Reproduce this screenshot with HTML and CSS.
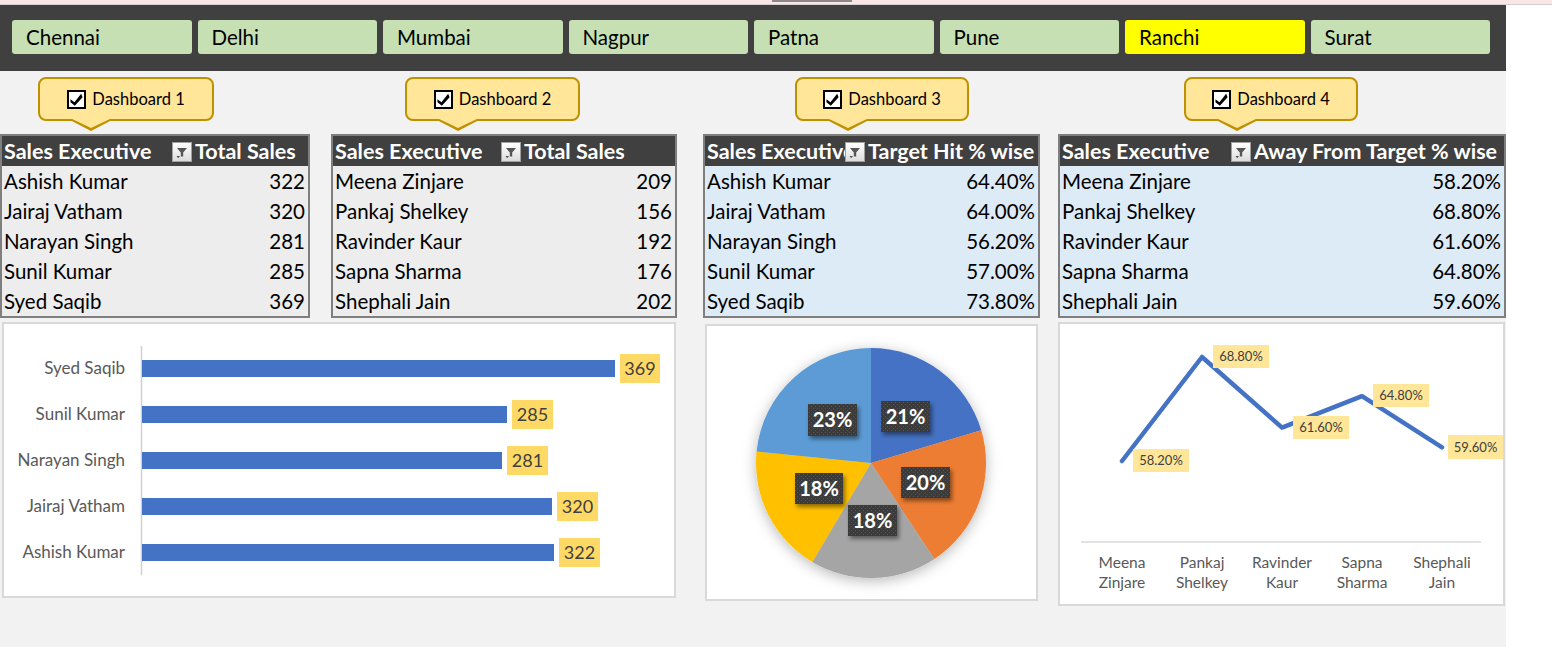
FILE: index.html
```html
<!DOCTYPE html>
<html>
<head>
<meta charset="utf-8">
<link rel="stylesheet" href="styles.css">
</head>
<body>
<div class="topstrip"><div class="thumb"></div></div>
<div class="sheet">
  <div class="slicer">
    <div class="city">Chennai</div>
    <div class="city">Delhi</div>
    <div class="city">Mumbai</div>
    <div class="city">Nagpur</div>
    <div class="city">Patna</div>
    <div class="city">Pune</div>
    <div class="city active">Ranchi</div>
    <div class="city">Surat</div>
  </div>

  <div class="callouts">
    <div class="callout c1"><span class="chk"><svg viewBox="0 0 14 14" width="13" height="13"><path d="M0.5 6.8 L4.8 10 L12 0.8 L13.6 4.6 L5.2 13.8 L0.5 10 Z" fill="#000"/></svg></span>Dashboard 1</div>
    <div class="callout c2"><span class="chk"><svg viewBox="0 0 14 14" width="13" height="13"><path d="M0.5 6.8 L4.8 10 L12 0.8 L13.6 4.6 L5.2 13.8 L0.5 10 Z" fill="#000"/></svg></span>Dashboard 2</div>
    <div class="callout c3"><span class="chk"><svg viewBox="0 0 14 14" width="13" height="13"><path d="M0.5 6.8 L4.8 10 L12 0.8 L13.6 4.6 L5.2 13.8 L0.5 10 Z" fill="#000"/></svg></span>Dashboard 3</div>
    <div class="callout c4"><span class="chk"><svg viewBox="0 0 14 14" width="13" height="13"><path d="M0.5 6.8 L4.8 10 L12 0.8 L13.6 4.6 L5.2 13.8 L0.5 10 Z" fill="#000"/></svg></span>Dashboard 4</div>
  </div>

  <div class="tables">
    <table class="tbl t1 grey">
      <colgroup><col class="w1a"><col class="w1b"></colgroup>
      <tr><th class="hc">Sales Executive<span class="flt"><svg viewBox="0 0 18 18" width="18" height="18"><path d="M4 5 H14 L10.2 9.5 V13.5 H7.8 V9.5 Z" fill="#555"/><path d="M3.5 13 H7 L5.25 15.2 Z" fill="#555"/></svg></span></th><th class="lft">Total Sales</th></tr>
      <tr><td>Ashish Kumar</td><td class="num">322</td></tr>
      <tr><td>Jairaj Vatham</td><td class="num">320</td></tr>
      <tr><td>Narayan Singh</td><td class="num">281</td></tr>
      <tr><td>Sunil Kumar</td><td class="num">285</td></tr>
      <tr><td>Syed Saqib</td><td class="num">369</td></tr>
    </table>
    <table class="tbl t2 grey">
      <colgroup><col class="w2a"><col class="w2b"></colgroup>
      <tr><th class="hc">Sales Executive<span class="flt"><svg viewBox="0 0 18 18" width="18" height="18"><path d="M4 5 H14 L10.2 9.5 V13.5 H7.8 V9.5 Z" fill="#555"/><path d="M3.5 13 H7 L5.25 15.2 Z" fill="#555"/></svg></span></th><th class="lft">Total Sales</th></tr>
      <tr><td>Meena Zinjare</td><td class="num">209</td></tr>
      <tr><td>Pankaj Shelkey</td><td class="num">156</td></tr>
      <tr><td>Ravinder Kaur</td><td class="num">192</td></tr>
      <tr><td>Sapna Sharma</td><td class="num">176</td></tr>
      <tr><td>Shephali Jain</td><td class="num">202</td></tr>
    </table>
    <table class="tbl t3 blue">
      <colgroup><col class="w3a"><col class="w3b"></colgroup>
      <tr><th class="hc">Sales Executive<span class="flt"><svg viewBox="0 0 18 18" width="18" height="18"><path d="M4 5 H14 L10.2 9.5 V13.5 H7.8 V9.5 Z" fill="#555"/><path d="M3.5 13 H7 L5.25 15.2 Z" fill="#555"/></svg></span></th><th class="lft">Target Hit % wise</th></tr>
      <tr><td>Ashish Kumar</td><td class="num">64.40%</td></tr>
      <tr><td>Jairaj Vatham</td><td class="num">64.00%</td></tr>
      <tr><td>Narayan Singh</td><td class="num">56.20%</td></tr>
      <tr><td>Sunil Kumar</td><td class="num">57.00%</td></tr>
      <tr><td>Syed Saqib</td><td class="num">73.80%</td></tr>
    </table>
    <table class="tbl t4 blue">
      <colgroup><col class="w4a"><col class="w4b"></colgroup>
      <tr><th class="hc">Sales Executive<span class="flt"><svg viewBox="0 0 18 18" width="18" height="18"><path d="M4 5 H14 L10.2 9.5 V13.5 H7.8 V9.5 Z" fill="#555"/><path d="M3.5 13 H7 L5.25 15.2 Z" fill="#555"/></svg></span></th><th class="lft">Away From Target % wise</th></tr>
      <tr><td>Meena Zinjare</td><td class="num">58.20%</td></tr>
      <tr><td>Pankaj Shelkey</td><td class="num">68.80%</td></tr>
      <tr><td>Ravinder Kaur</td><td class="num">61.60%</td></tr>
      <tr><td>Sapna Sharma</td><td class="num">64.80%</td></tr>
      <tr><td>Shephali Jain</td><td class="num">59.60%</td></tr>
    </table>
  </div>

  <div class="charts">
    <div class="chart bar-chart">
      <svg width="670" height="272" viewBox="0 0 670 272" class="svgtxt">
        <line x1="137.5" y1="22" x2="137.5" y2="251" stroke="#d0d0d0" stroke-width="1.5"/>
        <g fill="#4472c4">
          <rect x="138" y="36" width="473" height="17"/>
          <rect x="138" y="82" width="365" height="17"/>
          <rect x="138" y="128" width="360" height="17"/>
          <rect x="138" y="174" width="410" height="17"/>
          <rect x="138" y="220" width="412" height="17"/>
        </g>
        <g fill="#ffd966">
          <rect x="616" y="30" width="40" height="29"/>
          <rect x="508" y="76" width="41" height="29"/>
          <rect x="503" y="122" width="41" height="29"/>
          <rect x="553" y="168" width="41" height="29"/>
          <rect x="555" y="214" width="41" height="29"/>
        </g>
        <g class="vlab" text-anchor="middle">
          <text x="636" y="51">369</text>
          <text x="528.5" y="97">285</text>
          <text x="523.5" y="143">281</text>
          <text x="573.5" y="189">320</text>
          <text x="575.5" y="235">322</text>
        </g>
        <g class="clab" text-anchor="end">
          <text x="121" y="50">Syed Saqib</text>
          <text x="121" y="96">Sunil Kumar</text>
          <text x="121" y="142">Narayan Singh</text>
          <text x="121" y="188">Jairaj Vatham</text>
          <text x="121" y="234">Ashish Kumar</text>
        </g>
      </svg>
    </div>

    <div class="chart pie-chart">
      <svg width="329" height="273" viewBox="0 0 329 273" class="svgtxt">
        <defs>
          <filter id="pshadow" x="-30%" y="-30%" width="160%" height="160%">
            <feDropShadow dx="0" dy="3" stdDeviation="7" flood-color="#000" flood-opacity="0.28"/>
          </filter>
          <filter id="lshadow" x="-30%" y="-30%" width="160%" height="160%">
            <feDropShadow dx="2" dy="3" stdDeviation="2" flood-color="#000" flood-opacity="0.45"/>
          </filter>
          <pattern id="dots" width="4" height="4" patternUnits="userSpaceOnUse">
            <rect width="4" height="4" fill="#3b3b3b"/>
            <rect x="0" y="0" width="1" height="1" fill="#555"/>
            <rect x="2" y="2" width="1" height="1" fill="#555"/>
          </pattern>
        </defs>
        <g filter="url(#pshadow)">
          <path d="M164 137 L164 22 A115 115 0 0 1 274.27 104.36 Z" fill="#4472c4"/>
          <path d="M164 137 L274.27 104.36 A115 115 0 0 1 227.38 232.96 Z" fill="#ed7d31"/>
          <path d="M164 137 L227.38 232.96 A115 115 0 0 1 105.27 235.88 Z" fill="#a5a5a5"/>
          <path d="M164 137 L105.27 235.88 A115 115 0 0 1 49.58 125.46 Z" fill="#ffc000"/>
          <path d="M164 137 L49.58 125.46 A115 115 0 0 1 164 22 Z" fill="#5b9bd5"/>
        </g>
        <g filter="url(#lshadow)" fill="url(#dots)">
          <rect x="174" y="75" width="49" height="31"/>
          <rect x="101" y="78" width="49" height="32"/>
          <rect x="194" y="141" width="49" height="31"/>
          <rect x="88" y="147" width="48" height="31"/>
          <rect x="141" y="179" width="49" height="31"/>
        </g>
        <g class="plab" text-anchor="middle">
          <text x="198.5" y="98">21%</text>
          <text x="125.5" y="101">23%</text>
          <text x="218.5" y="164">20%</text>
          <text x="112" y="170">18%</text>
          <text x="165.5" y="202">18%</text>
        </g>
      </svg>
    </div>

    <div class="chart line-chart">
      <svg width="443" height="280" viewBox="0 0 443 280" class="svgtxt">
        <line x1="21" y1="218" x2="421" y2="218" stroke="#d9d9d9" stroke-width="1.5"/>
        <polyline points="62,137 142,33 222,103.6 302,72.2 382,123.3" fill="none" stroke="#4472c4" stroke-width="4.5" stroke-linejoin="round" stroke-linecap="round"/>
        <g fill="#ffe699">
          <rect x="73" y="125" width="56" height="23"/>
          <rect x="153" y="21" width="56" height="23"/>
          <rect x="233" y="92" width="56" height="23"/>
          <rect x="313" y="60" width="56" height="23"/>
          <rect x="388" y="111" width="55" height="24"/>
        </g>
        <g class="llab" text-anchor="middle">
          <text x="101" y="141">58.20%</text>
          <text x="181" y="37">68.80%</text>
          <text x="261" y="108">61.60%</text>
          <text x="341" y="76">64.80%</text>
          <text x="415.5" y="128">59.60%</text>
        </g>
        <g class="xlab" text-anchor="middle">
          <text x="62" y="244">Meena</text><text x="62" y="264">Zinjare</text>
          <text x="142" y="244">Pankaj</text><text x="142" y="264">Shelkey</text>
          <text x="222" y="244">Ravinder</text><text x="222" y="264">Kaur</text>
          <text x="302" y="244">Sapna</text><text x="302" y="264">Sharma</text>
          <text x="382" y="244">Shephali</text><text x="382" y="264">Jain</text>
        </g>
      </svg>
    </div>
  </div>
</div>
</body>
</html>
```

FILE: styles.css
```css
* { box-sizing: border-box; }
html, body { margin: 0; padding: 0; background: #ffffff; }
body { font-family: "Lato", "Open Sans", sans-serif; color: #000; }

.topstrip {
  height: 5px;
  background: #fbe6e6;
  border-bottom: 1px solid #d6cfcf;
  display: flex;
}
.thumb {
  margin-left: 772px;
  width: 80px;
  height: 2px;
  background: #8a8a8a;
}

.sheet {
  width: 1506px;
  height: 642px;
  background: #f2f2f2;
}

.slicer {
  height: 66px;
  background: #404040;
  display: flex;
  gap: 6px;
  padding: 15px 0 0 12px;
}
.city {
  width: 179.5px;
  height: 34px;
  background: #c6e0b4;
  border-radius: 3px;
  font-size: 20.5px;
  line-height: 34px;
  padding-left: 14px;
  color: #000;
}
.city.active { background: #ffff00; }

.callouts {
  display: flex;
  margin-top: 6px;
  height: 44px;
}
.callout {
  position: relative;
  height: 44px;
  background: #ffe699;
  border: 2px solid #bf9000;
  border-radius: 8px;
  display: flex;
  align-items: center;
  justify-content: center;
  font-size: 16.5px;
  color: #000;
}
.callout::before {
  content: "";
  position: absolute;
  left: 28px;
  bottom: -12px;
  border-left: 23px solid transparent;
  border-right: 23px solid transparent;
  border-top: 12px solid #bf9000;
}
.callout::after {
  content: "";
  position: absolute;
  left: 30px;
  bottom: -9px;
  border-left: 21px solid transparent;
  border-right: 21px solid transparent;
  border-top: 10px solid #ffe699;
}
.c1 { margin-left: 38px; width: 176px; }
.c2 { margin-left: 191px; width: 175px; }
.c3 { margin-left: 215px; width: 174px; }
.c4 { margin-left: 215px; width: 174px; }
.chk {
  width: 19px;
  height: 19px;
  border: 2px solid #000;
  background: #fff;
  display: inline-flex;
  align-items: center;
  justify-content: center;
  margin-right: 6px;
}

.tables {
  display: flex;
  align-items: flex-start;
  margin-top: 13px;
}
.tbl {
  border-collapse: separate;
  border-spacing: 0;
  border: 2px solid #7f7f7f;
  table-layout: fixed;
  font-size: 20.5px;
}
.tbl th, .tbl td {
  height: 30px;
  padding: 0 2px 0 2px;
  white-space: nowrap;
  overflow: hidden;
}
.tbl th {
  background: #404040;
  color: #fff;
  font-weight: 700;
  font-size: 21.5px;
  text-align: left;
}
.tbl .hc { position: relative; }
.tbl th.lft { padding-left: 3px; }
.tbl td.num { text-align: right; padding-right: 3px; }
.grey td { background: #ededed; }
.blue td { background: #ddebf7; }
.flt {
  position: absolute;
  right: 0;
  top: 6px;
  width: 20px;
  height: 20px;
  border: 1px solid #a0a0a0;
  background: linear-gradient(#ffffff, #dcdcdc);
  display: flex;
  align-items: center;
  justify-content: center;
}
.t1 { width: 310px; }
.t2 { width: 346px; margin-left: 21px; }
.t3 { width: 337px; margin-left: 26px; }
.t4 { width: 448px; margin-left: 18px; }
.w1a { width: 190px; } .w1b { width: 116px; }
.w2a { width: 188px; } .w2b { width: 154px; }
.w3a { width: 160px; } .w3b { width: 173px; }
.w4a { width: 191px; } .w4b { width: 253px; }

.charts {
  display: flex;
  align-items: flex-start;
  margin-top: 4px;
}
.chart {
  background: #fff;
  border: 2px solid #d9d9d9;
}
.chart svg { display: block; }
.bar-chart { width: 674px; height: 276px; margin-left: 2px; }
.pie-chart { width: 333px; height: 277px; margin-left: 29px; margin-top: 2px; }
.line-chart { width: 447px; height: 284px; margin-left: 20px; }

.svgtxt text { font-family: "Lato", "Open Sans", sans-serif; }
.vlab text { font-size: 18px; fill: #404040; }
.clab text { font-size: 17px; fill: #595959; }
.plab text { font-size: 20px; font-weight: 700; fill: #fff; }
.llab text { font-size: 13px; fill: #404040; }
.xlab text { font-size: 15.5px; fill: #595959; }
```
